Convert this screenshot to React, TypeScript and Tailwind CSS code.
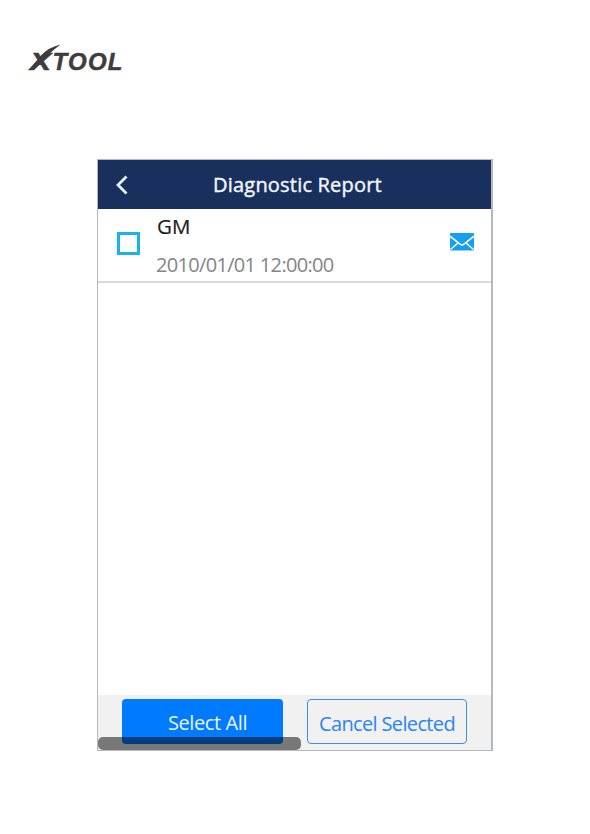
import React from 'react';

const Logo: React.FC = () => (
    <svg width="100" height="32" viewBox="0 0 100 32" className="block" role="img" aria-label="XTOOL">
        <g fill="#403c3d" stroke="#403c3d" strokeWidth="0.5" fontFamily="'Liberation Sans', Arial, sans-serif" fontWeight="700" fontStyle="italic">
            <text x="2" y="27.8" fontSize="24" textLength="21" lengthAdjust="spacingAndGlyphs">X</text>
            <text x="24.5" y="27.8" fontSize="24" textLength="70" lengthAdjust="spacing">TOOL</text>
        </g>
        {/* swoosh over the X */}
        <path d="M0.5 28 L6 28 Q17 14 32.5 2.5 Q21 5 13 13.5 Z" fill="#403c3d" />
    </svg>
);

const Envelope: React.FC = () => (
    <svg width="24" height="18" viewBox="0 0 24 18" className="block">
        <rect width="24" height="17.5" rx="1" fill="#169fee" />
        <path d="M0 3.2 L10 11.2 Q12 12.8 14 11.2 L24 3.2 M0.5 16.5 L8 10 M23.5 16.5 L16 10" fill="none" stroke="#fff" strokeWidth="1.5" />
    </svg>
);

const Header: React.FC<{ title: string }> = ({ title }) => (
    <header className="grid h-[49px] grid-cols-[48px_1fr_42px] items-center bg-[#19305f]">
        <button type="button" aria-label="Back" className="flex h-full items-center pl-[17px]">
            <svg width="14" height="20" viewBox="0 0 14 20" fill="none" stroke="#e4f4f6" strokeWidth="2.8">
                <path d="M11.5 1.5 L3 10 L11.5 18.5" />
            </svg>
        </button>
        <h1 className="text-center text-[20px] leading-none font-medium tracking-[0.2px] whitespace-nowrap text-[#f3f7fc] [-webkit-text-stroke:0.4px_#f3f7fc]">{title}</h1>
    </header>
);

const ReportRow: React.FC<{ name: string; date: string }> = ({ name, date }) => (
    <div className="flex h-[74px] border-b-2 border-[#d9d9d9] pr-[17px] pl-[19px]">
        <div className="mt-[23px] h-[23px] w-[23px] shrink-0 border-[3px] border-[#1db0ee]" />
        <div className="flex-1 pt-[4px] pl-[16px] whitespace-nowrap">
            <div className="h-[39px] pl-px text-[20.5px] leading-[26px] text-[#1d1d1d] [-webkit-text-stroke:0.2px_#1d1d1d]">{name}</div>
            <div className="text-[20px] leading-[26px] tracking-[-0.68px] text-[#858585]">{date}</div>
        </div>
        <div className="mt-[24px]">
            <Envelope />
        </div>
    </div>
);

const App: React.FC = () => (
    <div className="h-[834px] w-[590px] overflow-hidden bg-white pt-[42px] font-['Open_Sans','Noto_Sans',sans-serif]">
        <div className="h-[117px] pl-7">
            <Logo />
        </div>
        <main className="relative ml-[97px] flex h-[592px] w-[396px] flex-col border border-r-2 border-[#b5b8bc]">
            <Header title="Diagnostic Report" />
            <ReportRow name="GM" date="2010/01/01 12:00:00" />
            <div className="flex-1" />
            <footer className="flex h-[55px] gap-6 bg-[#f1f1f1] pt-[4px] pl-[24px] leading-none whitespace-nowrap">
                <button type="button" className="h-[45px] w-[161px] rounded-[4px] bg-[#007aff] pt-[2px] pl-[10px] text-[20px] tracking-[-0.4px] text-[#eaf5ff]">
                    Select All
                </button>
                <button type="button" className="h-[45px] w-[160px] rounded-[4px] border border-[#3b8df0] pt-[4px] text-[20px] tracking-[-0.65px] text-[#2885f5]">
                    Cancel Selected
                </button>
            </footer>
            {/* horizontal scrollbar thumb */}
            <div className="absolute bottom-0 left-0 h-[13px] w-[203px] rounded-[5px] bg-black/50" />
        </main>
    </div>
);

export default App;
